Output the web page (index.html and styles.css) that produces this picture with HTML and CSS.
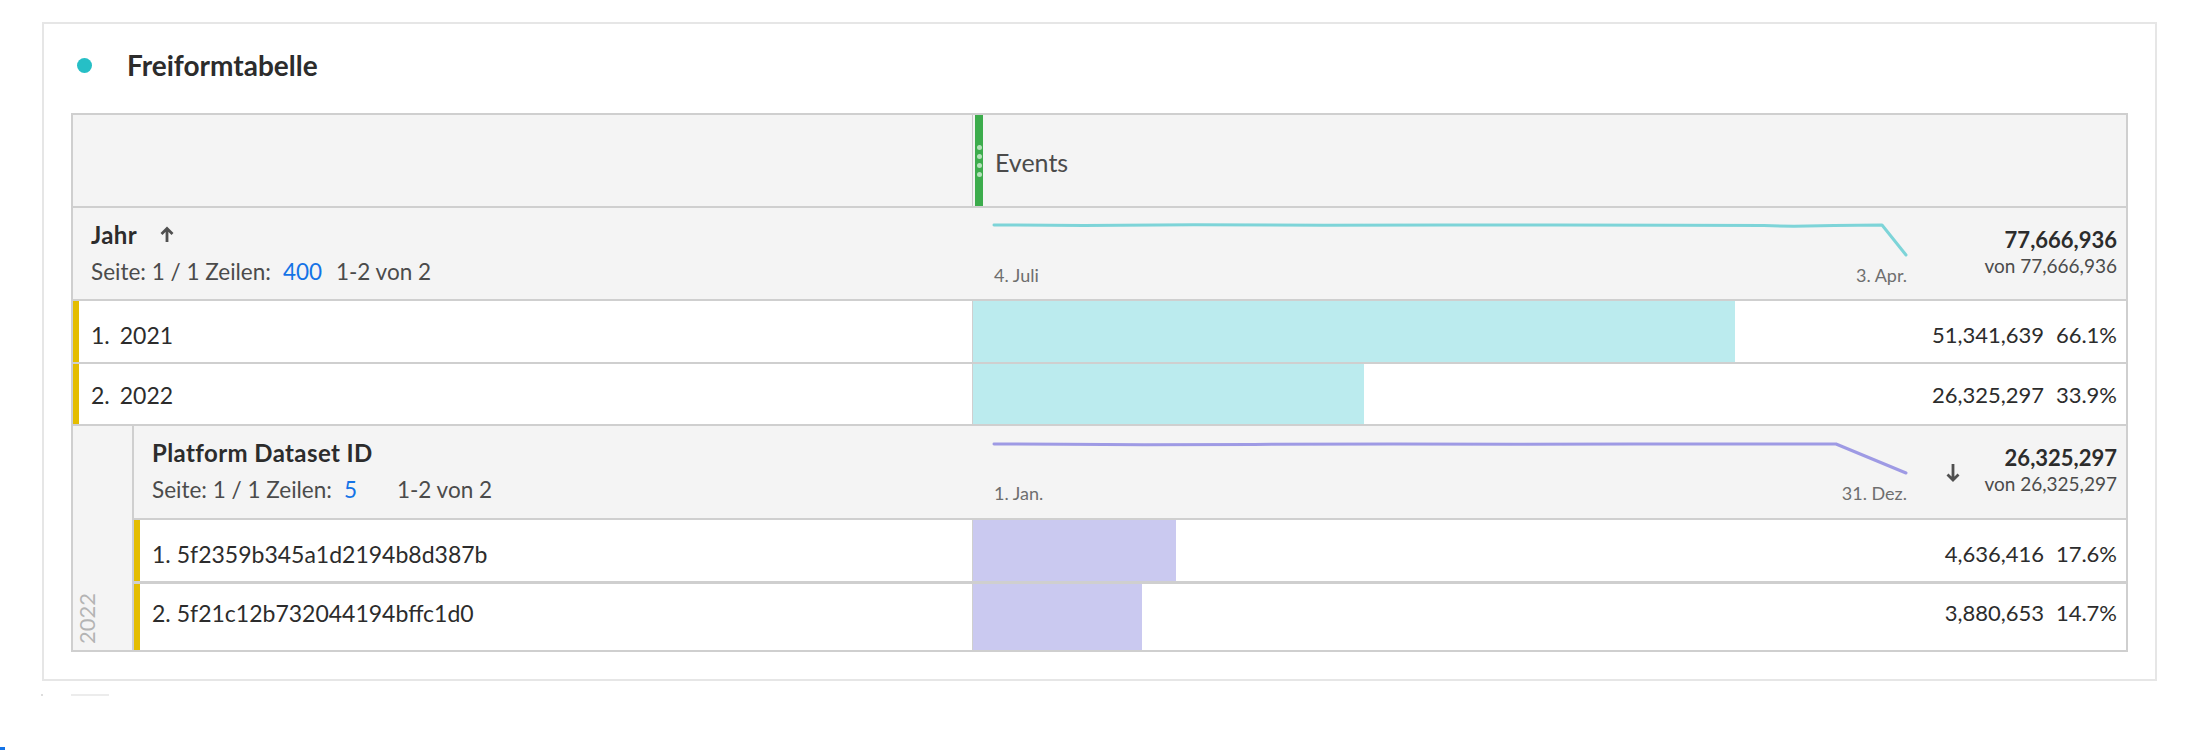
FILE: index.html
```html
<!DOCTYPE html>
<html lang="de">
<head>
<meta charset="utf-8">
<title>Freiformtabelle</title>
<link rel="stylesheet" href="styles.css">
</head>
<body>
<div class="panel">
  <div class="panel-head">
    <span class="dot"></span>
    <h1 class="title">Freiformtabelle</h1>
  </div>
  <div class="table">
    <div class="row col-head">
      <div class="lcell"></div>
      <div class="rcell">
        <span class="grip"><i></i><i></i><i></i><i></i></span>
        <span class="metric">Events</span>
      </div>
    </div>

    <div class="row dim-head h-jahr">
      <div class="lcell">
        <div class="dim-title"><span>Jahr</span>
          <svg class="sort-up" viewBox="0 0 16 17"><path d="M8 16V2.5M2.5 8L8 2.5L13.5 8"/></svg>
        </div>
        <div class="pager"><span>Seite: 1 / 1 Zeilen:</span><span class="rows-input">400</span><span>1-2 von 2</span></div>
      </div>
      <div class="rcell">
        <div class="spark">
          <svg viewBox="0 0 913 55"><polyline class="line-cyan" points="0,17 90,17.4 200,16.8 330,17.2 450,17 560,16.9 680,17.2 770,17.6 800,18.2 840,17.4 888,17 912,47"/></svg>
          <div class="dates"><span>4. Juli</span><span>3. Apr.</span></div>
        </div>
        <div class="totals">
          <div class="total">77,666,936</div>
          <div class="of">von 77,666,936</div>
        </div>
      </div>
    </div>

    <div class="row data h-r1">
      <div class="lcell"><span class="idx">1.</span><span>2021</span></div>
      <div class="rcell"><div class="bar bar-cyan" style="width:66.1%"></div><div class="vals"><span>51,341,639</span><span class="pct">66.1%</span></div></div>
    </div>

    <div class="row data h-r2">
      <div class="lcell"><span class="idx">2.</span><span>2022</span></div>
      <div class="rcell"><div class="bar bar-cyan" style="width:33.9%"></div><div class="vals"><span>26,325,297</span><span class="pct">33.9%</span></div></div>
    </div>

    <div class="breakdown">
      <div class="side"><span class="side-label">2022</span></div>
      <div class="sub">
        <div class="row dim-head h-plat">
          <div class="lcell">
            <div class="dim-title"><span>Platform Dataset ID</span></div>
            <div class="pager"><span>Seite: 1 / 1 Zeilen:</span><span class="rows-input">5</span><span>1-2 von 2</span></div>
          </div>
          <div class="rcell">
            <div class="spark">
              <svg viewBox="0 0 913 55"><polyline class="line-purple" points="0,18 70,18.2 150,18.8 260,18.4 400,18 520,18.3 640,18 760,18 842,18 912,47"/></svg>
              <div class="dates"><span>1. Jan.</span><span>31. Dez.</span></div>
            </div>
            <svg class="sort-down" viewBox="0 0 16 19"><path d="M8 1V17M2.5 11.5L8 17L13.5 11.5"/></svg>
            <div class="totals">
              <div class="total">26,325,297</div>
              <div class="of">von 26,325,297</div>
            </div>
          </div>
        </div>

        <div class="row data sub-row h-a">
          <div class="lcell"><span class="idx">1.</span><span>5f2359b345a1d2194b8d387b</span></div>
          <div class="rcell"><div class="bar bar-purple" style="width:17.6%"></div><div class="vals"><span>4,636,416</span><span class="pct">17.6%</span></div></div>
        </div>

        <div class="row data sub-row h-b">
          <div class="lcell"><span class="idx">2.</span><span>5f21c12b732044194bffc1d0</span></div>
          <div class="rcell"><div class="bar bar-purple" style="width:14.7%"></div><div class="vals"><span>3,880,653</span><span class="pct">14.7%</span></div></div>
        </div>
      </div>
    </div>
  </div>
</div>
<div class="foot"><span class="foot-dot"></span><span class="foot-line"></span></div>
<div class="blue-mark"></div>
</body>
</html>
```

FILE: styles.css
```css
* { box-sizing: border-box; margin: 0; padding: 0; }

html, body { background: #ffffff; }

body {
  width: 2198px;
  height: 750px;
  overflow: hidden;
  font-family: Lato, "Open Sans", sans-serif;
  color: #2c2c2c;
}

/* ---------- panel ---------- */
.panel {
  margin: 22px 0 0 42px;
  width: 2115px;
  border: 2px solid #e6e6e6;
  padding: 0 27px 27px;
}

.panel-head {
  height: 89px;
  display: flex;
  align-items: center;
  padding: 0 0 7px 6px;
}

.dot {
  width: 15px;
  height: 15px;
  border-radius: 50%;
  background: #26bfc6;
  flex: none;
}

.title {
  margin-left: 35px;
  font-size: 28px;
  font-weight: 700;
  color: #2c2c2c;
}

/* ---------- table ---------- */
.table {
  border: 2px solid #cfcfcf;
  background: #ffffff;
}

.row {
  display: flex;
  border-bottom: 2px solid #cfcfcf;
}

.lcell { flex: 1; min-width: 0; }

.rcell {
  width: 1154px;
  flex: none;
  display: flex;
  border-left: 1px solid transparent;
}

/* column header */
.col-head { height: 93px; background: #f4f4f4; }
.col-head .rcell { border-left-color: #c8c8c8; }

.grip {
  width: 8px;
  margin-left: 2px;
  background: #3cac4c;
  display: flex;
  flex-direction: column;
  align-items: center;
  justify-content: center;
  gap: 4px;
}

.grip i {
  display: block;
  width: 5px;
  height: 5px;
  border-radius: 50%;
  background: #b3e2b9;
}

.metric {
  align-self: center;
  margin-left: 12px;
  padding-top: 3px;
  font-size: 25px;
  line-height: 30px;
  color: #4b4b4b;
}

/* dimension header rows */
.dim-head { background: #f4f4f4; }
.h-jahr { height: 93px; }
.h-plat { height: 94px; }

.dim-head .lcell { padding: 12.5px 0 0 18px; }

.dim-title {
  display: flex;
  align-items: center;
  height: 28px;
  font-size: 24px;
  font-weight: 700;
  letter-spacing: 0.4px;
  line-height: 28px;
  color: #2c2c2c;
}

.sort-up {
  width: 16px;
  height: 17px;
  margin-left: 22px;
  fill: none;
  stroke: #505050;
  stroke-width: 2.8;
}

.pager {
  display: flex;
  margin-top: 9.5px;
  font-size: 22.5px;
  line-height: 28px;
  color: #4b4b4b;
  white-space: nowrap;
}

.rows-input {
  width: 53px;
  margin-left: 12px;
  color: #1473e6;
}

.dim-head .rcell { padding-left: 21px; }

.spark { width: 913px; flex: none; }

.spark svg {
  display: block;
  width: 913px;
  height: 55px;
  overflow: visible;
}

.spark polyline {
  fill: none;
  stroke-width: 3;
  stroke-linejoin: round;
  stroke-linecap: round;
}

.line-cyan { stroke: #7dd4d8; }
.line-purple { stroke: #9e9ae4; }

.dates {
  display: flex;
  justify-content: space-between;
  font-size: 18px;
  line-height: 24px;
  color: #6e6e6e;
}

.sort-down {
  flex: none;
  width: 16px;
  height: 19px;
  margin: 37px 0 0 38px;
  fill: none;
  stroke: #505050;
  stroke-width: 2.8;
}

.totals {
  margin-left: auto;
  padding: 19px 9px 0 0;
  text-align: right;
  white-space: nowrap;
}

.total {
  font-size: 22px;
  font-weight: 700;
  line-height: 26px;
  color: #2c2c2c;
}

.of {
  font-size: 19px;
  line-height: 26px;
  color: #4b4b4b;
}

/* data rows */
.h-r1 { height: 63px; }
.h-r2 { height: 62px; }
.h-a { height: 64px; border-bottom-width: 3px; }
.h-b { height: 66px; border-bottom: 0; }

.data .lcell {
  display: flex;
  align-items: center;
  border-left: 6px solid #e4bd00;
  padding: 6px 0 0 12px;
  font-size: 23px;
  line-height: 26px;
  color: #2c2c2c;
  white-space: nowrap;
}

.idx { margin-right: 10px; }
.sub-row .idx { margin-right: 6px; }

.data .rcell { border-left-color: #cfcfcf; }

.bar { flex: none; }
.bar-cyan { background: #bbebee; }
.bar-purple { background: #cac9f0; }

.vals {
  margin-left: auto;
  align-self: center;
  display: flex;
  padding: 6px 9px 0 0;
  font-size: 22px;
  line-height: 26px;
  color: #2c2c2c;
  white-space: nowrap;
}

.pct { width: 73px; text-align: right; }

.h-r2 .lcell, .h-r2 .vals { padding-top: 2px; }
.h-b .lcell { padding-top: 0; padding-bottom: 8px; }
.h-b .vals { padding-top: 0; padding-bottom: 8px; }

/* breakdown block */
.breakdown { display: flex; height: 224px; }

.side {
  width: 61px;
  flex: none;
  background: #f4f4f4;
  border-right: 2px solid #cfcfcf;
  display: flex;
  flex-direction: column;
  justify-content: flex-end;
  align-items: flex-start;
  padding: 0 0 6px 3px;
}

.side-label {
  writing-mode: vertical-rl;
  transform: rotate(180deg);
  font-size: 22px;
  line-height: 22px;
  color: #b4b4b4;
}

.sub { flex: 1; min-width: 0; display: flex; flex-direction: column; }

/* below panel */
.foot {
  display: flex;
  align-items: center;
  height: 2px;
  margin-top: 13px;
}

.foot-dot {
  width: 2px;
  height: 2px;
  margin-left: 41px;
  background: #dddddd;
}

.foot-line {
  width: 38px;
  height: 2px;
  margin-left: 28px;
  background: #ececec;
}

.blue-mark {
  width: 5px;
  height: 3px;
  margin-top: 51px;
  background: #1473e6;
}
```
